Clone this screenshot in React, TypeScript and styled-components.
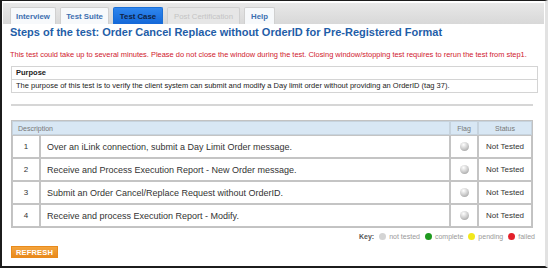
import styled, { createGlobalStyle } from "styled-components";

const GlobalStyle = createGlobalStyle`
  html, body {
    margin: 0;
    padding: 0;
    background: #ffffff;
    font-family: "Liberation Sans", Arial, sans-serif;
  }
`;

interface StepType {
  num: number;
  text: string;
}

const steps: StepType[] = [
  { num: 1, text: "Over an iLink connection, submit a Day Limit Order message." },
  { num: 2, text: "Receive and Process Execution Report - New Order message." },
  { num: 3, text: "Submit an Order Cancel/Replace Request without OrderID." },
  { num: 4, text: "Receive and process Execution Report - Modify." },
];

const tabs = [
  { label: "Interview", state: "normal", width: 46 },
  { label: "Test Suite", state: "normal", width: 49 },
  { label: "Test Case", state: "active", width: 50 },
  { label: "Post Certification", state: "disabled", width: 73 },
  { label: "Help", state: "normal", width: 31 },
];

const keys = [
  { label: "not tested", color: "#d4d4d4" },
  { label: "complete", color: "#1f9a1f" },
  { label: "pending", color: "#f2e81c" },
  { label: "failed", color: "#e3202a" },
];

const Frame = styled.div`
  box-sizing: border-box;
  width: 548px;
  height: 268px;
  border-top: 1px solid #1c1c1c;
  border-left: 2px solid #1c1c1c;
  border-bottom: 2px solid #1c1c1c;
  border-right: 3px solid #e2e2e2;
  background: #fff;
  overflow: hidden;
`;

const TabBar = styled.div`
  display: flex;
  align-items: flex-end;
  gap: 3px;
  height: 21px;
  margin: 2px 1px 0 1px;
  padding-left: 7px;
  background: linear-gradient(#e8e8e8, #d8d8d8);
`;

const Tab = styled.div<{ $state: string; $w: number }>`
  box-sizing: border-box;
  width: ${(p) => p.$w}px;
  height: 17px;
  display: flex;
  align-items: center;
  justify-content: center;
  font-size: 7.8px;
  font-weight: ${(p) => (p.$state === "disabled" ? "normal" : "bold")};
  white-space: nowrap;
  border: 1px solid ${(p) => (p.$state === "active" ? "#1a6fd6" : "#d0d0d0")};
  border-bottom: none;
  border-radius: 2px 2px 0 0;
  margin-right: 1px;
  background: ${(p) =>
    p.$state === "active"
      ? "linear-gradient(#2f86ee, #1468d8)"
      : p.$state === "disabled"
      ? "#e6e6e6"
      : "#f7f9fb"};
  color: ${(p) =>
    p.$state === "active"
      ? "#0f2244"
      : p.$state === "disabled"
      ? "#c4c4c4"
      : "#3d6fb0"};
`;

const Content = styled.div`
  padding: 0 10px 0 8px;
`;

const Title = styled.h1`
  margin: 3px 0 0 0;
  font-size: 11px;
  line-height: 11px;
  font-weight: bold;
  color: #1f5ea8;
`;

const Warning = styled.p`
  margin: 12px 0 0 0;
  font-size: 7.45px;
  line-height: 10px;
  color: #d0202e;
  white-space: nowrap;
`;

const PurposeBox = styled.div`
  margin: 6px 0 0 1px;
  width: 525px;
  border: 1px solid #d4d4d4;
`;

const PurposeHead = styled.div`
  height: 12px;
  line-height: 12px;
  padding-left: 4px;
  font-size: 7.5px;
  font-weight: bold;
  color: #222;
  border-bottom: 1px solid #d4d4d4;
`;

const PurposeBody = styled.div`
  height: 12px;
  line-height: 12px;
  padding-left: 4px;
  font-size: 7.5px;
  color: #222;
`;

const Divider = styled.div`
  margin: 11px 0 0 1px;
  width: 522px;
  height: 2px;
  background: #d6d6d6;
`;

const Table = styled.table`
  margin: 14px 0 0 1px;
  width: 522px;
  border-collapse: separate;
  border-spacing: 0;
  border: 1px solid #c2c2c2;
  color: #333;
`;

const Th = styled.th<{ $center?: boolean }>`
  height: 12px;
  padding: 0 5px;
  background: #d8e7f4;
  color: #777;
  font-weight: normal;
  font-size: 7px;
  text-align: ${(p) => (p.$center ? "center" : "left")};
  border: 1px solid #c6d3de;
`;

const Td = styled.td<{ $center?: boolean; $w?: number; $size?: number }>`
  height: 21px;
  padding: 0 6px;
  font-size: ${(p) => p.$size ?? 8}px;
  text-align: ${(p) => (p.$center ? "center" : "left")};
  border: 1px solid #c4c4c4;
  ${(p) => (p.$w ? `width: ${p.$w}px;` : "")}
`;

const Ball = styled.span`
  display: inline-block;
  width: 9px;
  height: 9px;
  border-radius: 50%;
  vertical-align: middle;
  background: radial-gradient(
    circle at 40% 30%,
    #ffffff 0%,
    #c8c8c8 55%,
    #8e8e8e 100%
  );
`;

const KeyRow = styled.div`
  display: flex;
  justify-content: flex-end;
  align-items: center;
  gap: 5px;
  margin: 5px 0 0 0;
  font-size: 7px;
  color: #999;
`;

const KeyLabel = styled.span`
  font-weight: bold;
  color: #555;
`;

const KeyItem = styled.span`
  display: inline-flex;
  align-items: center;
  gap: 3px;
`;

const KeyDot = styled.span<{ $color: string }>`
  display: inline-block;
  width: 7px;
  height: 7px;
  border-radius: 50%;
  background: ${(p) => p.$color};
`;

const Refresh = styled.button`
  display: block;
  margin: 6px 0 0 1px;
  height: 12px;
  width: 47px;
  padding: 0;
  border: 1px solid #e88a1c;
  background: linear-gradient(#f4a53e, #e8891c);
  color: #fff;
  font-family: "Liberation Sans", Arial, sans-serif;
  font-size: 7.5px;
  font-weight: bold;
  letter-spacing: 0.2px;
`;

const App = () => {
  return (
    <>
      <GlobalStyle />
      <Frame>
        <TabBar>
          {tabs.map((tab) => (
            <Tab key={tab.label} $state={tab.state} $w={tab.width}>
              {tab.label}
            </Tab>
          ))}
        </TabBar>
        <Content>
          <Title>
            Steps of the test: Order Cancel Replace without OrderID for
            Pre-Registered Format
          </Title>
          <Warning>
            This test could take up to several minutes. Please do not close the
            window during the test. Closing window/stopping test requires to
            rerun the test from step1.
          </Warning>
          <PurposeBox>
            <PurposeHead>Purpose</PurposeHead>
            <PurposeBody>
              The purpose of this test is to verify the client system can submit
              and modify a Day limit order without providing an OrderID (tag 37).
            </PurposeBody>
          </PurposeBox>
          <Divider />
          <Table>
            <thead>
              <tr>
                <Th colSpan={2}>Description</Th>
                <Th $center>Flag</Th>
                <Th $center>Status</Th>
              </tr>
            </thead>
            <tbody>
              {steps.map((step) => (
                <tr key={step.num}>
                  <Td $center $w={14}>
                    {step.num}
                  </Td>
                  <Td $size={9}>{step.text}</Td>
                  <Td $center $w={14}>
                    <Ball />
                  </Td>
                  <Td $center $w={40}>
                    Not Tested
                  </Td>
                </tr>
              ))}
            </tbody>
          </Table>
          <KeyRow>
            <KeyLabel>Key:</KeyLabel>
            {keys.map((k) => (
              <KeyItem key={k.label}>
                <KeyDot $color={k.color} />
                {k.label}
              </KeyItem>
            ))}
          </KeyRow>
          <Refresh>REFRESH</Refresh>
        </Content>
      </Frame>
    </>
  );
};

export default App;
